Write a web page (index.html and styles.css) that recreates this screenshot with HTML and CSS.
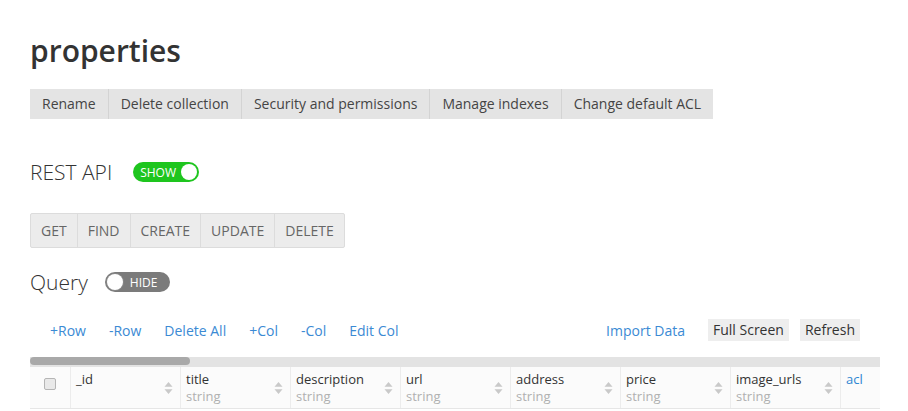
FILE: index.html
```html
<!DOCTYPE html>
<html>
<head>
<meta charset="utf-8">
<link rel="stylesheet" href="styles.css">
</head>
<body>
<h1 class="title">properties</h1>
<div class="actions">
  <span class="act">Rename</span><span class="act">Delete collection</span><span class="act">Security and permissions</span><span class="act">Manage indexes</span><span class="act">Change default ACL</span>
</div>

<div class="section-row rest">
  <span class="section-label">REST API</span>
  <span class="toggle on"><span class="toggle-text">SHOW</span><span class="knob"></span></span>
</div>

<div class="methods">
  <span class="method">GET</span><span class="method">FIND</span><span class="method">CREATE</span><span class="method">UPDATE</span><span class="method">DELETE</span>
</div>

<div class="section-row query">
  <span class="section-label">Query</span>
  <span class="toggle off"><span class="knob"></span><span class="toggle-text">HIDE</span></span>
</div>

<div class="toolbar">
  <div class="links">
    <a class="link">+Row</a><a class="link">-Row</a><a class="link">Delete All</a><a class="link">+Col</a><a class="link">-Col</a><a class="link">Edit Col</a>
  </div>
  <div class="tools">
    <a class="link">Import Data</a><span class="tbtn">Full Screen</span><span class="tbtn">Refresh</span>
  </div>
</div>

<div class="grid-wrap">
  <div class="hscroll"><div class="thumb"></div></div>
  <div class="header">
    <div class="cell check"><span class="box"></span></div>
    <div class="cell"><div class="col-text"><div class="col-name">_id</div></div><svg class="sort" width="9" height="14" viewBox="0 0 9 14"><path d="M4.5 1 L8.5 5.8 H0.5 Z M4.5 13 L8.5 8.2 H0.5 Z" fill="#c9c9c9"/></svg></div>
    <div class="cell"><div class="col-text"><div class="col-name">title</div><div class="col-type">string</div></div><svg class="sort" width="9" height="14" viewBox="0 0 9 14"><path d="M4.5 1 L8.5 5.8 H0.5 Z M4.5 13 L8.5 8.2 H0.5 Z" fill="#c9c9c9"/></svg></div>
    <div class="cell"><div class="col-text"><div class="col-name">description</div><div class="col-type">string</div></div><svg class="sort" width="9" height="14" viewBox="0 0 9 14"><path d="M4.5 1 L8.5 5.8 H0.5 Z M4.5 13 L8.5 8.2 H0.5 Z" fill="#c9c9c9"/></svg></div>
    <div class="cell"><div class="col-text"><div class="col-name">url</div><div class="col-type">string</div></div><svg class="sort" width="9" height="14" viewBox="0 0 9 14"><path d="M4.5 1 L8.5 5.8 H0.5 Z M4.5 13 L8.5 8.2 H0.5 Z" fill="#c9c9c9"/></svg></div>
    <div class="cell"><div class="col-text"><div class="col-name">address</div><div class="col-type">string</div></div><svg class="sort" width="9" height="14" viewBox="0 0 9 14"><path d="M4.5 1 L8.5 5.8 H0.5 Z M4.5 13 L8.5 8.2 H0.5 Z" fill="#c9c9c9"/></svg></div>
    <div class="cell"><div class="col-text"><div class="col-name">price</div><div class="col-type">string</div></div><svg class="sort" width="9" height="14" viewBox="0 0 9 14"><path d="M4.5 1 L8.5 5.8 H0.5 Z M4.5 13 L8.5 8.2 H0.5 Z" fill="#c9c9c9"/></svg></div>
    <div class="cell"><div class="col-text"><div class="col-name">image_urls</div><div class="col-type">string</div></div><svg class="sort" width="9" height="14" viewBox="0 0 9 14"><path d="M4.5 1 L8.5 5.8 H0.5 Z M4.5 13 L8.5 8.2 H0.5 Z" fill="#c9c9c9"/></svg></div>
    <div class="cell"><div class="col-text"><div class="col-name acl">acl</div></div></div>
  </div>
</div>
</body>
</html>
```

FILE: styles.css
```css
html, body {
  margin: 0;
  background: #fff;
}
body {
  font-family: "Open Sans", "Liberation Sans", sans-serif;
  color: #333;
  padding: 0 28px 0 30px;
  overflow: hidden;
}
.title {
  margin: 0;
  padding-top: 31px;
  font-size: 30px;
  line-height: 40px;
  font-weight: 600;
  color: #333;
}
.actions {
  margin-top: 18px;
  display: flex;
  width: max-content;
  background: #e4e4e4;
}
.act {
  height: 30px;
  line-height: 30px;
  font-size: 14px;
  color: #444;
  padding: 0 12px;
  border-left: 1px solid #d3d3d3;
}
.act:first-child {
  border-left: none;
}
.section-row {
  display: flex;
  align-items: center;
  height: 28px;
}
.rest {
  margin-top: 39px;
}
.query {
  margin-top: 20px;
}
.section-label {
  font-size: 21px;
  line-height: 28px;
  font-weight: 300;
  color: #333;
}
.toggle {
  display: flex;
  align-items: center;
  box-sizing: border-box;
  border-radius: 10px;
  height: 20px;
  color: #fff;
  font-size: 12px;
}
.toggle .knob {
  width: 16px;
  height: 16px;
  border-radius: 50%;
  background: #fff;
}
.toggle.on {
  background: #1ec51e;
  width: 66px;
  margin-left: 21px;
  padding: 0 2px 0 7px;
  justify-content: space-between;
}
.toggle.off {
  background: #7b7b7b;
  width: 65px;
  margin-left: 17px;
  padding: 0 2px 0 2px;
}
.toggle.off .toggle-text {
  margin-left: 7px;
}
.toggle.off .knob {
  box-shadow: 0 0 0 1px #888;
}
.methods {
  margin-top: 27px;
  display: flex;
  width: max-content;
  border: 1px solid #dcdcdc;
  border-radius: 2px;
  background: #ececec;
}
.method {
  height: 33px;
  line-height: 33px;
  padding: 0 10px;
  font-size: 14px;
  color: #666;
  border-left: 1px solid #dcdcdc;
}
.method:first-child {
  border-left: none;
}
.toolbar {
  margin-top: 23px;
  display: flex;
  justify-content: space-between;
  align-items: center;
  height: 22px;
  width: 850px;
  font-size: 14px;
}
.links {
  display: flex;
  gap: 23px;
  padding-left: 20px;
}
.link {
  color: #3b8ad4;
}
.tools {
  display: flex;
  align-items: center;
  padding-right: 20px;
}
.tools .link {
  margin-right: 23px;
}
.tbtn {
  background: #eeeeee;
  color: #333;
  height: 22px;
  line-height: 22px;
  padding: 0 5px;
  margin-left: 11px;
}
.tools .link + .tbtn {
  margin-left: 0;
}
.grid-wrap {
  margin-top: 15px;
  width: 850px;
  overflow: hidden;
}
.hscroll {
  height: 10px;
  background: #e3e3e3;
}
.thumb {
  width: 160px;
  height: 8px;
  margin-top: 1px;
  border-radius: 4px;
  background: #a9a9a9;
}
.header {
  display: flex;
  height: 41px;
  border-bottom: 1px solid #e6e6e6;
  background: #fbfbfb;
}
.cell {
  flex: 0 0 110px;
  box-sizing: border-box;
  border-left: 1px solid #ececec;
  display: flex;
  align-items: flex-start;
  justify-content: space-between;
  padding: 4px 7px 0 5px;
}
.cell.check {
  flex: 0 0 40px;
  border-left: none;
  justify-content: center;
  align-items: flex-start;
  padding: 11px 0 0 0;
}
.box {
  width: 10px;
  height: 10px;
  border: 1px solid #b5b5b5;
  border-radius: 2px;
  background: #e9e9e9;
}
.col-name {
  font-size: 13px;
  line-height: 17px;
  color: #333;
}
.col-name.acl {
  color: #2f86d2;
}
.col-type {
  font-size: 13px;
  line-height: 17px;
  color: #b0b0b0;
}
.sort {
  margin-top: 10px;
  flex: none;
}
```
